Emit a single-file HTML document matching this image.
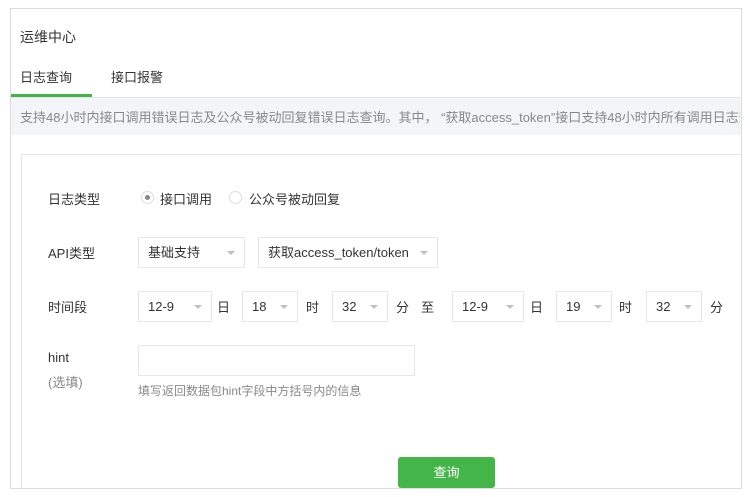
<!DOCTYPE html>
<html><head><meta charset="utf-8"><style>
*{box-sizing:border-box;margin:0;padding:0}
body{width:750px;height:497px;background:#fff;font-family:"Liberation Sans","Noto Sans CJK SC",sans-serif;font-size:13px;color:#333;position:relative;overflow:hidden}
.a{position:absolute;white-space:nowrap}
.outer{position:absolute;left:10px;top:8px;width:732px;height:481px;border:1px solid #dcdcdc}
.sel{position:absolute;height:31px;border:1px solid #e4e8eb;background:#fff;line-height:29px;padding-left:9px;font-size:13px;color:#333}
.sel:after{content:"";position:absolute;right:9px;top:13px;border:4px solid transparent;border-top:4px solid #c0c0c0}
.lbl{color:#333}
</style></head><body>
<div class="outer"></div>
<div class="a" style="left:20px;top:27px;font-size:14px">运维中心</div>
<div class="a" style="left:20px;top:67px;font-size:13px">日志查询</div>
<div class="a" style="left:111px;top:67px;font-size:13px">接口报警</div>
<div class="a" style="left:11px;top:94px;width:81px;height:3px;background:#44b549"></div>
<div class="a" style="left:11px;top:97px;width:730px;height:38px;background:#f4f5f9;border-top:1px solid #e7e7eb"></div>
<div class="a" style="left:20px;top:107px;font-size:13px;color:#888;width:720px;overflow:hidden">支持48小时内接口调用错误日志及公众号被动回复错误日志查询。其中， “获取access_token”接口支持48小时内所有调用日志查询。</div>
<div class="a" style="left:21px;top:154px;width:720px;height:334px;border-top:1px solid #e7e7eb;border-left:1px solid #e7e7eb"></div>
<div class="a lbl" style="left:48px;top:189px">日志类型</div>
<div class="a" style="left:141px;top:191px;width:13px;height:13px;border:1px solid #ddd;border-radius:50%"></div>
<div class="a" style="left:145px;top:195px;width:5px;height:5px;background:#888;border-radius:50%"></div>
<div class="a" style="left:160px;top:189px">接口调用</div>
<div class="a" style="left:229px;top:191px;width:13px;height:13px;border:1px solid #ddd;border-radius:50%"></div>
<div class="a" style="left:249px;top:189px">公众号被动回复</div>
<div class="a lbl" style="left:48px;top:243px">API类型</div>
<div class="sel" style="left:138px;top:237px;width:107px">基础支持</div>
<div class="sel" style="left:258px;top:237px;width:180px">获取access_token/token</div>
<div class="a lbl" style="left:48px;top:297px">时间段</div>
<div class="sel" style="left:138px;top:291px;width:74px">12-9</div>
<div class="a" style="left:217px;top:297px">日</div>
<div class="sel" style="left:242px;top:291px;width:56px">18</div>
<div class="a" style="left:306px;top:297px">时</div>
<div class="sel" style="left:332px;top:291px;width:56px">32</div>
<div class="a" style="left:396px;top:297px">分</div>
<div class="a" style="left:421px;top:297px">至</div>
<div class="sel" style="left:452px;top:291px;width:72px">12-9</div>
<div class="a" style="left:530px;top:297px">日</div>
<div class="sel" style="left:556px;top:291px;width:56px">19</div>
<div class="a" style="left:619px;top:297px">时</div>
<div class="sel" style="left:646px;top:291px;width:56px">32</div>
<div class="a" style="left:710px;top:297px">分</div>
<div class="a lbl" style="left:48px;top:350px">hint</div>
<div class="a" style="left:48px;top:372px;color:#888">(选填)</div>
<div class="a" style="left:138px;top:345px;width:277px;height:31px;border:1px solid #e4e8eb"></div>
<div class="a" style="left:138px;top:382px;font-size:12px;color:#888">填写返回数据包hint字段中方括号内的信息</div>
<div class="a" style="left:398px;top:457px;width:97px;height:31px;background:#44b549;border-radius:3px;color:#fff;text-align:center;line-height:31px">查询</div>
</body></html>
